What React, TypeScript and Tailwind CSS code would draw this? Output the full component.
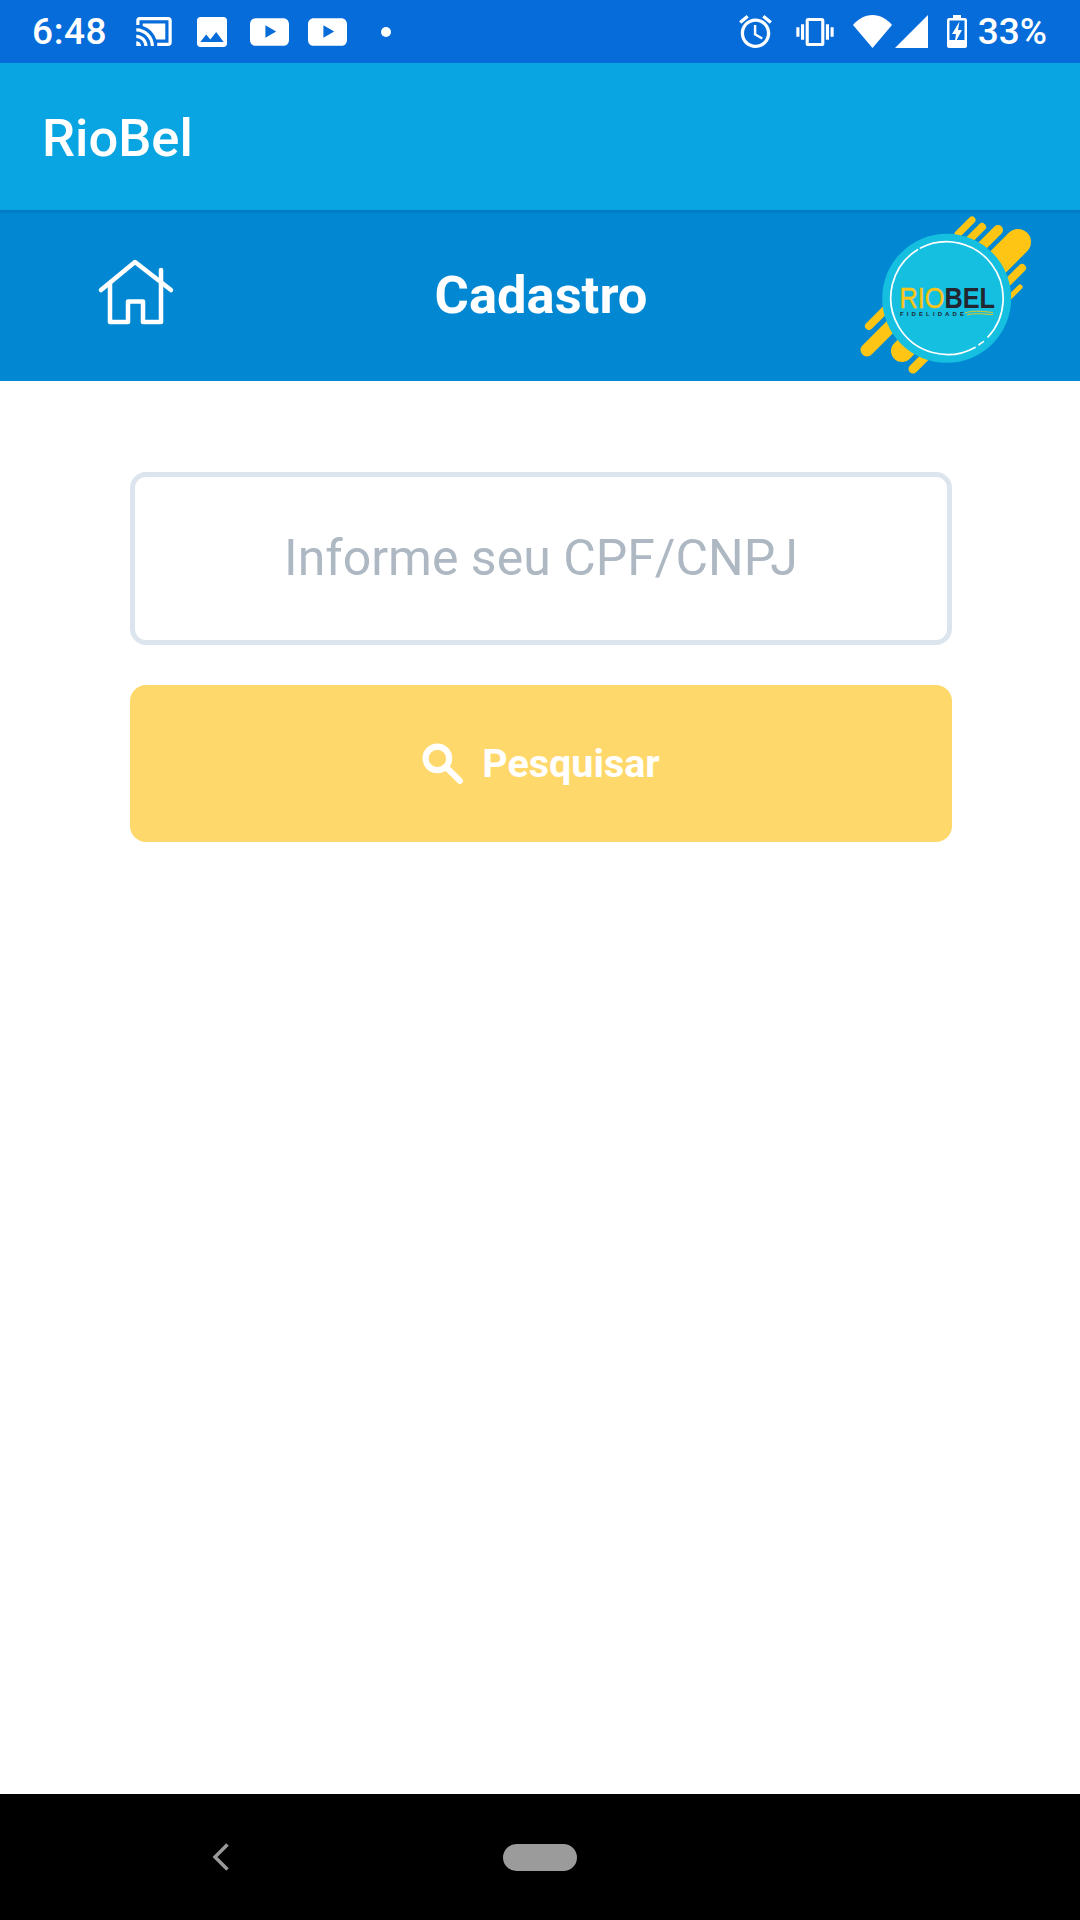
const roboto = { fontFamily: "Roboto, sans-serif" };

const CastIcon = () => (
  <svg className="w-[36px] h-[29px]" viewBox="1 3 22 18" fill="#fff">
    <path d="M19 7H5v1.63c3.96 1.28 7.09 4.41 8.37 8.37H19V7zM1 18v3h3c0-1.66-1.34-3-3-3zm0-4v2c2.76 0 5 2.24 5 5h2c0-3.87-3.13-7-7-7zM1 10v2c4.97 0 9 4.03 9 9h2c0-6.08-4.93-11-11-11zm20-7H3c-1.1 0-2 .9-2 2v3h2V5h18v14h-7v2h7c1.1 0 2-.9 2-2V5c0-1.1-.9-2-2-2z" />
  </svg>
);

const ImageIcon = () => (
  <svg className="w-[30px] h-[30px]" viewBox="3 3 18 18" fill="#fff">
    <path d="M21 19V5c0-1.1-.9-2-2-2H5c-1.1 0-2 .9-2 2v14c0 1.1.9 2 2 2h14c1.1 0 2-.9 2-2zM8.500 13.500l2.500 3.010L14.500 12l4.500 6H5l3.500-4.500z" />
  </svg>
);

const PlayIcon = () => (
  <svg className="w-[39px] h-[28px]" viewBox="0 0 38 27" fill="#fff">
    <path
      fillRule="evenodd"
      d="M6 0H32C36 0 38 2.500 38 6V21C38 24.500 36 27 32 27H6C2 27 0 24.500 0 21V6C0 2.500 2 0 6 0ZM15 7V19L25.500 13Z"
    />
  </svg>
);

const StatusBar = () => (
  <div className="flex h-[63px] shrink-0 items-center bg-[#056cd9] pl-[32px] pr-[33px] text-white" style={roboto}>
    <span className="w-[71px] whitespace-nowrap text-[37px] font-medium leading-none tracking-[0.6px]">6:48</span>
    <div className="ml-[33px]"><CastIcon /></div>
    <div className="ml-[25px]"><ImageIcon /></div>
    <div className="ml-[23px]"><PlayIcon /></div>
    <div className="ml-[19px]"><PlayIcon /></div>
    <div className="ml-[34px] h-[10px] w-[10px] rounded-full bg-white" />

    <div className="ml-auto flex items-center">
      <svg className="w-[33px] h-[33px]" viewBox="2 1.860 20 20.140" fill="#fff">
        <path d="M22 5.720l-4.600-3.860-1.290 1.530 4.600 3.860L22 5.720zM7.880 3.390L6.600 1.860 2 5.710l1.290 1.530 4.590-3.850zM12.500 8H11v6l4.750 2.850.75-1.230-4-2.370V8zM12 4c-4.970 0-9 4.030-9 9s4.020 9 9 9c4.970 0 9-4.030 9-9s-4.030-9-9-9zm0 16c-3.870 0-7-3.130-7-7s3.130-7 7-7 7 3.130 7 7-3.130 7-7 7z" />
      </svg>
      <svg className="ml-[24px] w-[38px] h-[28px]" viewBox="0 3 24 18" fill="#fff">
        <path d="M0 15h2V9H0v6zm3 2h2V7H3v10zm19-8v6h2V9h-2zm-3 8h2V7h-2v10zM16.500 3h-9C6.670 3 6 3.670 6 4.500v15c0 .83.67 1.500 1.500 1.500h9c.83 0 1.500-.67 1.500-1.500v-15c0-.83-.67-1.500-1.500-1.500zM16 19H8V5h8v14z" />
      </svg>
      <svg className="ml-[19px] w-[39px] h-[33px]" viewBox="0 0 39 33" fill="#fff">
        <path d="M19.500 33L0 10C5 4 12 0 19.500 0C27 0 34 4 39 10Z" />
      </svg>
      <svg className="ml-[3px] w-[33px] h-[33px]" viewBox="0 0 33 33" fill="#fff">
        <path d="M33 0V33H0Z" />
      </svg>
      <svg className="ml-[19px] w-[20px] h-[33px]" viewBox="0 0 20 33">
        <path fill="#fff" d="M6 0H14V3H18C19 3 20 4 20 5V31C20 32 19 33 18 33H2C1 33 0 32 0 31V5C0 4 1 3 2 3H6Z" />
        <path fill="#056cd9" d="M2.500 5.500H17.500V25H2.500Z" />
        <path fill="#fff" d="M12.500 6.500L5 19H9L7.500 29L15 15H11Z" />
      </svg>
      <span className="ml-[11px] text-[37px] font-medium leading-none">33%</span>
    </div>
  </div>
);

const HomeIcon = () => (
  <svg className="w-[120px] h-[100px]" viewBox="0 0 120 100" fill="none" stroke="#fff" strokeWidth="4.500" strokeLinecap="round" strokeLinejoin="round">
    <path d="M21 50L55 22L91 50" />
    <path d="M30 43V82H48V61.500H63V82H81V30" />
  </svg>
);

// round bars behind the badge, all on the same diagonal
const logoBars = [
  { x1: 178, y1: 42, x2: 122, y2: 98, w: 26 },
  { x1: 182, y1: 68, x2: 160, y2: 90, w: 8 },
  { x1: 180, y1: 87, x2: 165, y2: 102, w: 5 },
  { x1: 132, y1: 20, x2: 118, y2: 34, w: 7 },
  { x1: 142, y1: 27, x2: 126, y2: 43, w: 8 },
  { x1: 158, y1: 30, x2: 136, y2: 52, w: 10 },
  { x1: 29, y1: 126, x2: 50, y2: 105, w: 8 },
  { x1: 27, y1: 150, x2: 60, y2: 117, w: 13 },
  { x1: 62, y1: 151, x2: 85, y2: 128, w: 22 },
  { x1: 73, y1: 169, x2: 95, y2: 147, w: 9 },
];

const Logo = () => (
  <svg className="w-[190px] h-[171px]" viewBox="20 10 190 171" fill="none">
    {logoBars.map((b) => (
      <line key={`${b.x1}-${b.y1}`} x1={b.x1} y1={b.y1} x2={b.x2} y2={b.y2} stroke="#fec514" strokeWidth={b.w} strokeLinecap="round" />
    ))}
    <circle cx="106.700" cy="98.300" r="64.500" fill="#14bfdf" />
    <g stroke="#fff" strokeWidth="1.700" strokeLinecap="round">
      <path d="M80.500 48A56.700 56.700 0 0 1 148 137" />
      <path d="M143.300 141.700A56.700 56.700 0 0 1 139 144.700" />
      <path d="M135 147.400A56.700 56.700 0 0 1 77.500 49.700" />
    </g>
    <text x="59.500" y="108" fontSize="29.500" fontFamily="Liberation Sans, sans-serif" textLength="95.500" lengthAdjust="spacingAndGlyphs">
      <tspan fill="#fec514" stroke="#fec514" strokeWidth="0.400">RIO</tspan>
      <tspan fill="#23262f" fontWeight="700">BEL</tspan>
    </text>
    <text x="60" y="116" fontSize="6" fontWeight="700" fill="#23262f" fontFamily="Liberation Sans, sans-serif" textLength="64">
      FIDELIDADE
    </text>
    <path d="M125 113C132 110.500 140 111 153 112.500M127 115C135 112.500 145 114.500 153 114.500" stroke="#fec514" strokeWidth="0.900" />
  </svg>
);

const SearchIcon = () => (
  <svg className="w-[41px] h-[41px]" viewBox="0 0 40 40" fill="none" stroke="#fff" strokeWidth="6" strokeLinecap="round">
    <circle cx="15" cy="15" r="11.500" />
    <path d="M25 25L37 37" />
  </svg>
);

const App = () => {
  return (
    <div className="flex min-h-screen w-full flex-col bg-white" style={roboto}>
      <StatusBar />

      {/* app bar */}
      <div className="flex h-[147px] shrink-0 items-center bg-[#08a5e2] pl-[42px] pt-[4px]">
        <h1 className="text-[52.500px] font-medium leading-none text-white">RioBel</h1>
      </div>

      {/* page header */}
      <div className="grid h-[171px] shrink-0 grid-cols-[220px_1fr_220px] bg-[#0288d3] shadow-[inset_0_5px_4px_-3px_rgba(0,0,0,0.12)]">
        <div className="pl-[80px] pt-[30px]">
          <HomeIcon />
        </div>
        <h2 className="self-center pl-[2px] text-center text-[52.500px] font-bold leading-none text-white">Cadastro</h2>
        <Logo />
      </div>

      {/* search form */}
      <div className="flex flex-1 flex-col gap-[40px] pl-[130px] pr-[128px] pt-[91px]">
        <input
          className="h-[173px] w-full rounded-[16px] border-[5px] border-[#dce5ed] bg-white pb-[2px] text-center text-[50px] outline-none placeholder:text-[#adb8c3]"
          placeholder="Informe seu CPF/CNPJ"
        />
        <button className="flex h-[157px] items-center justify-center gap-[19px] rounded-[16px] bg-[#ffd86b] text-[39.500px] font-bold text-white">
          <SearchIcon />
          Pesquisar
        </button>
      </div>

      {/* android nav bar */}
      <div className="flex h-[126px] shrink-0 items-center bg-black pl-[212px]">
        <svg className="w-[17px] h-[28px]" viewBox="0 0 17 28" fill="none" stroke="#999" strokeWidth="3.500">
          <path d="M15.500 1.500L3 14L15.500 26.500" />
        </svg>
        <div className="ml-[274px] h-[27px] w-[74px] rounded-full bg-[#9b9b9b]" />
      </div>
    </div>
  );
};

export default App;
